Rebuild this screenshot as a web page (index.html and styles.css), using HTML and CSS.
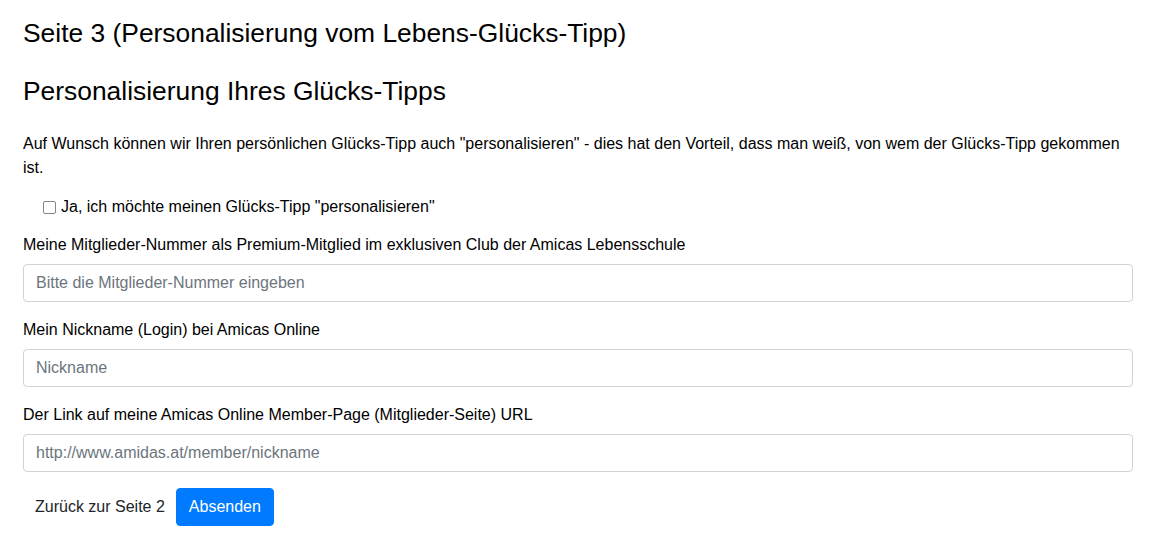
FILE: index.html
```html
<!DOCTYPE html>
<html lang="de">
<head>
<meta charset="utf-8">
<title>Seite 3</title>
<link rel="stylesheet" href="styles.css">
</head>
<body>
<div class="container">
  <h4 class="title">Seite 3 (Personalisierung vom Lebens-Glücks-Tipp)</h4>
  <h4 class="title second">Personalisierung Ihres Glücks-Tipps</h4>
  <form class="form">
    <p class="intro">Auf Wunsch können wir Ihren persönlichen Glücks-Tipp auch "personalisieren" - dies hat den Vorteil, dass man weiß, von wem der Glücks-Tipp gekommen ist.</p>
    <div class="form-check">
      <label class="check-label"><input type="checkbox" class="check-input"> Ja, ich möchte meinen Glücks-Tipp "personalisieren"</label>
    </div>
    <div class="form-group">
      <label class="field-label" for="nr">Meine Mitglieder-Nummer als Premium-Mitglied im exklusiven Club der Amicas Lebensschule</label>
      <input class="form-control" id="nr" type="text" placeholder="Bitte die Mitglieder-Nummer eingeben">
    </div>
    <div class="form-group">
      <label class="field-label" for="nick">Mein Nickname (Login) bei Amicas Online</label>
      <input class="form-control" id="nick" type="text" placeholder="Nickname">
    </div>
    <div class="form-group">
      <label class="field-label" for="url">Der Link auf meine Amicas Online Member-Page (Mitglieder-Seite) URL</label>
      <input class="form-control" id="url" type="text" placeholder="http://www.amidas.at/member/nickname">
    </div>
    <div class="actions">
      <button type="button" class="btn btn-plain">Zurück zur Seite 2</button>
      <button type="button" class="btn btn-primary">Absenden</button>
    </div>
  </form>
</div>
</body>
</html>
```
FILE: styles.css
```css
* { box-sizing: border-box; }
html, body {
  margin: 0;
  padding: 0;
  background: #fff;
}
body {
  font-family: "Liberation Sans", Arial, sans-serif;
  font-size: 16px;
  line-height: 1.5;
  color: #212529;
}
.container {
  max-width: 1140px;
  margin: 0 auto;
  padding: 0 15px;
}
.title {
  font-size: 26.4px;
  font-weight: 400;
  line-height: 1.2;
  color: #000;
  margin: 18px 0 0;
}
.title.second {
  margin-top: 26px;
}
.form {
  padding-top: 25px;
}
.intro {
  margin: 0 0 15px;
  color: #000;
}
.form-check {
  padding-left: 20px;
  margin-bottom: 14px;
}
.check-label {
  display: flex;
  align-items: center;
  gap: 4px;
  color: #000;
}
.check-input {
  appearance: none;
  -webkit-appearance: none;
  flex: none;
  width: 13px;
  height: 13px;
  margin: 0 1px 0 0;
  border: 1px solid #858585;
  border-radius: 2px;
  background: #fff;
}
.form-group {
  margin-bottom: 16px;
}
.field-label {
  display: block;
  margin-bottom: 7px;
  color: #000;
}
.form-control {
  display: block;
  width: 100%;
  height: 38px;
  padding: 6px 12px;
  font-family: inherit;
  font-size: 16px;
  line-height: 1.5;
  color: #495057;
  background: #fff;
  border: 1px solid #ced4da;
  border-radius: 4px;
}
.form-control::placeholder {
  color: #6c757d;
  opacity: 1;
}
.actions {
  display: flex;
  gap: 0;
}
.btn {
  height: 38px;
  padding: 6px 12px;
  font-family: inherit;
  font-size: 16px;
  line-height: 1.5;
  border: 1px solid transparent;
  border-radius: 4px;
  cursor: pointer;
}
.btn-plain {
  padding: 6px 10px 6px 11px;
  background: #fff;
  color: #212529;
}
.btn-primary {
  padding: 6px 12px;
  background: #007bff;
  border-color: #007bff;
  color: #fff;
}
```
